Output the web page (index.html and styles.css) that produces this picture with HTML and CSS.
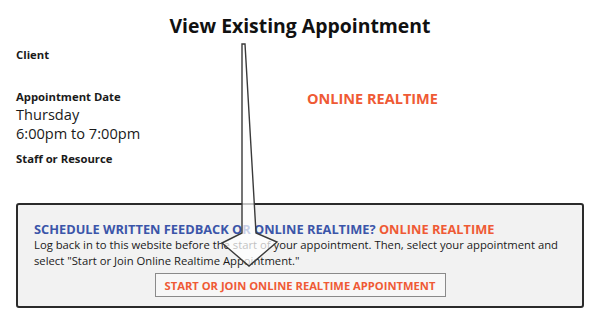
FILE: index.html
```html
<!DOCTYPE html>
<html lang="en">
<head>
  <meta charset="UTF-8" />
  <title>View Existing Appointment</title>
  <link rel="stylesheet" href="styles.css">
</head>
<body>
<h1 class="title">View Existing Appointment</h1>
<div class="details">
  <div class="col-left">
    <div class="label client">Client</div>
    <div class="label date-label">Appointment Date</div>
    <div class="value">Thursday</div>
    <div class="value">6:00pm to 7:00pm</div>
    <div class="label staff">Staff or Resource</div>
  </div>
  <div class="col-right">
    <div class="mode">ONLINE REALTIME</div>
  </div>
</div>
<div class="panel">
  <div class="panel-head">SCHEDULE WRITTEN FEEDBACK OR ONLINE REALTIME? <span class="orange">ONLINE REALTIME</span></div>
  <p class="panel-text">Log back in to this website before the start of your appointment. Then, select your appointment and select "Start or Join Online Realtime Appointment."</p>
  <div class="btn-row">
    <button class="join-btn">START OR JOIN ONLINE REALTIME APPOINTMENT</button>
  </div>
</div>
<!-- callout arrow drawn over the page -->
<svg class="arrow" width="600" height="318" viewBox="0 0 600 318">
  <polygon points="242,44 245,44 256,233 277,242 249,266 222,243 242,233"
           fill="rgba(255,255,255,0.72)" stroke="#3a3a3a" stroke-width="1.4" stroke-linejoin="miter"/>
</svg>
</body>
</html>
```

FILE: styles.css
```css
:root {
  --orange: #ef5a35;
  --blue: #3b55a9;
  --dark: #1a1a1a;
}
body {
  margin: 0;
  padding: 0 16px;
  font-family: 'Open Sans', 'Noto Sans', sans-serif;
  color: var(--dark);
  background: #fff;
  position: relative;
  width: 568px;
  height: 318px;
  overflow: hidden;
}
.title {
  margin: 10px 0 0;
  font-size: 19.4px;
  line-height: 32px;
  font-weight: 700;
  text-align: center;
  color: #111;
}
.details {
  display: grid;
  grid-template-columns: 291px 1fr;
}
.label {
  font-size: 11.3px;
  font-weight: 700;
  line-height: 16px;
}
.client {
  margin-top: 5px;
}
.date-label {
  margin-top: 26px;
}
.value {
  font-size: 14.6px;
  line-height: 19px;
}
.staff {
  margin-top: 8px;
}
.col-right {
  padding-top: 47px;
}
.mode {
  font-size: 14.5px;
  font-weight: 700;
  line-height: 20px;
  color: var(--orange);
}
.panel {
  margin-top: 36px;
  border: 2px solid #2b2b2b;
  border-radius: 3px;
  background: #f2f2f2;
  padding: 16px 16px 9px;
}
.panel-head {
  font-size: 12.8px;
  font-weight: 700;
  line-height: 16px;
  color: var(--blue);
}
.orange {
  color: var(--orange);
}
.panel-text {
  margin: 0;
  font-size: 11.28px;
  line-height: 16px;
}
.btn-row {
  display: flex;
  justify-content: center;
  margin-top: 4px;
}
.join-btn {
  height: 24px;
  width: 291px;
  padding: 0;
  border: 1px solid #8a8a8a;
  background: #f7f7f7;
  font-family: inherit;
  font-size: 11.2px;
  font-weight: 700;
  white-space: nowrap;
  color: var(--orange);
}
.arrow {
  position: absolute;
  left: 0;
  top: 0;
  pointer-events: none;
}
```
